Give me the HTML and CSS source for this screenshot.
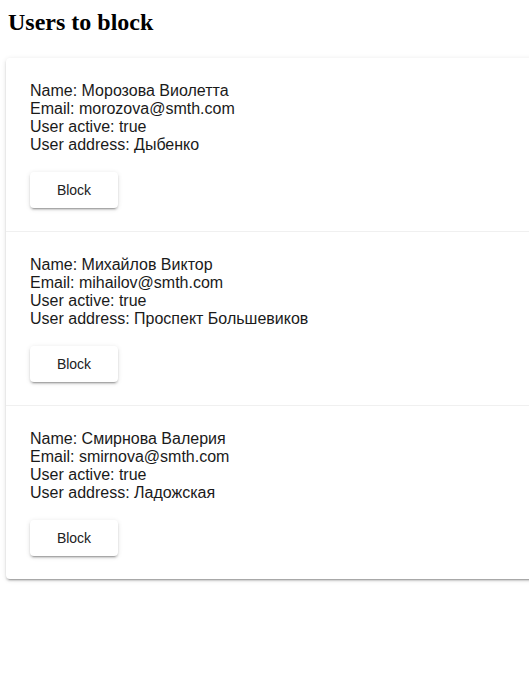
FILE: index.html
```html
<!DOCTYPE html>
<html>
<head>
<meta charset="utf-8">
<link rel="stylesheet" href="styles.css">
</head>
<body>
<div class="page">
<h2 class="title">Users to block</h2>
<div class="card">
  <div class="user">
    <div class="info">
      <div>Name: Морозова Виолетта</div>
      <div>Email: morozova@smth.com</div>
      <div>User active: true</div>
      <div>User address: Дыбенко</div>
    </div>
    <button class="block-btn">Block</button>
  </div>
  <div class="user">
    <div class="info">
      <div>Name: Михайлов Виктор</div>
      <div>Email: mihailov@smth.com</div>
      <div>User active: true</div>
      <div>User address: Проспект Большевиков</div>
    </div>
    <button class="block-btn">Block</button>
  </div>
  <div class="user">
    <div class="info">
      <div>Name: Смирнова Валерия</div>
      <div>Email: smirnova@smth.com</div>
      <div>User active: true</div>
      <div>User address: Ладожская</div>
    </div>
    <button class="block-btn">Block</button>
  </div>
</div>
</div>
</body>
</html>
```
FILE: styles.css
```css
body {
  margin: 0;
  background: #fff;
}
.page {
  padding: 9px 0 10px 8px;
  overflow-x: clip;
}
.title {
  font-family: "Liberation Serif", serif;
  font-size: 24px;
  font-weight: bold;
  margin: 0 0 22px;
  color: #000;
}
.card {
  margin-left: -2px;
  margin-right: -40px;
  background: #fff;
  border-radius: 4px;
  box-shadow: 0 3px 1px -2px rgba(0,0,0,0.2), 0 2px 2px 0 rgba(0,0,0,0.14), 0 1px 5px 0 rgba(0,0,0,0.12);
}
.user {
  padding: 24px 24px 23px;
  display: flex;
  flex-direction: column;
  align-items: flex-start;
  gap: 18px;
  border-bottom: 1px solid #f0f0f0;
}
.user:last-child {
  border-bottom: none;
}
.info {
  font-family: "Liberation Sans", Arial, sans-serif;
  font-size: 16px;
  line-height: 18px;
  color: #1a1a1a;
}
.block-btn {
  width: 88px;
  height: 36px;
  border: none;
  border-radius: 4px;
  background: #fff;
  font-family: "Liberation Sans", Arial, sans-serif;
  font-size: 14px;
  color: #212121;
  box-shadow: 0 3px 1px -2px rgba(0,0,0,0.2), 0 2px 2px 0 rgba(0,0,0,0.14), 0 1px 5px 0 rgba(0,0,0,0.12);
  cursor: pointer;
}
```
